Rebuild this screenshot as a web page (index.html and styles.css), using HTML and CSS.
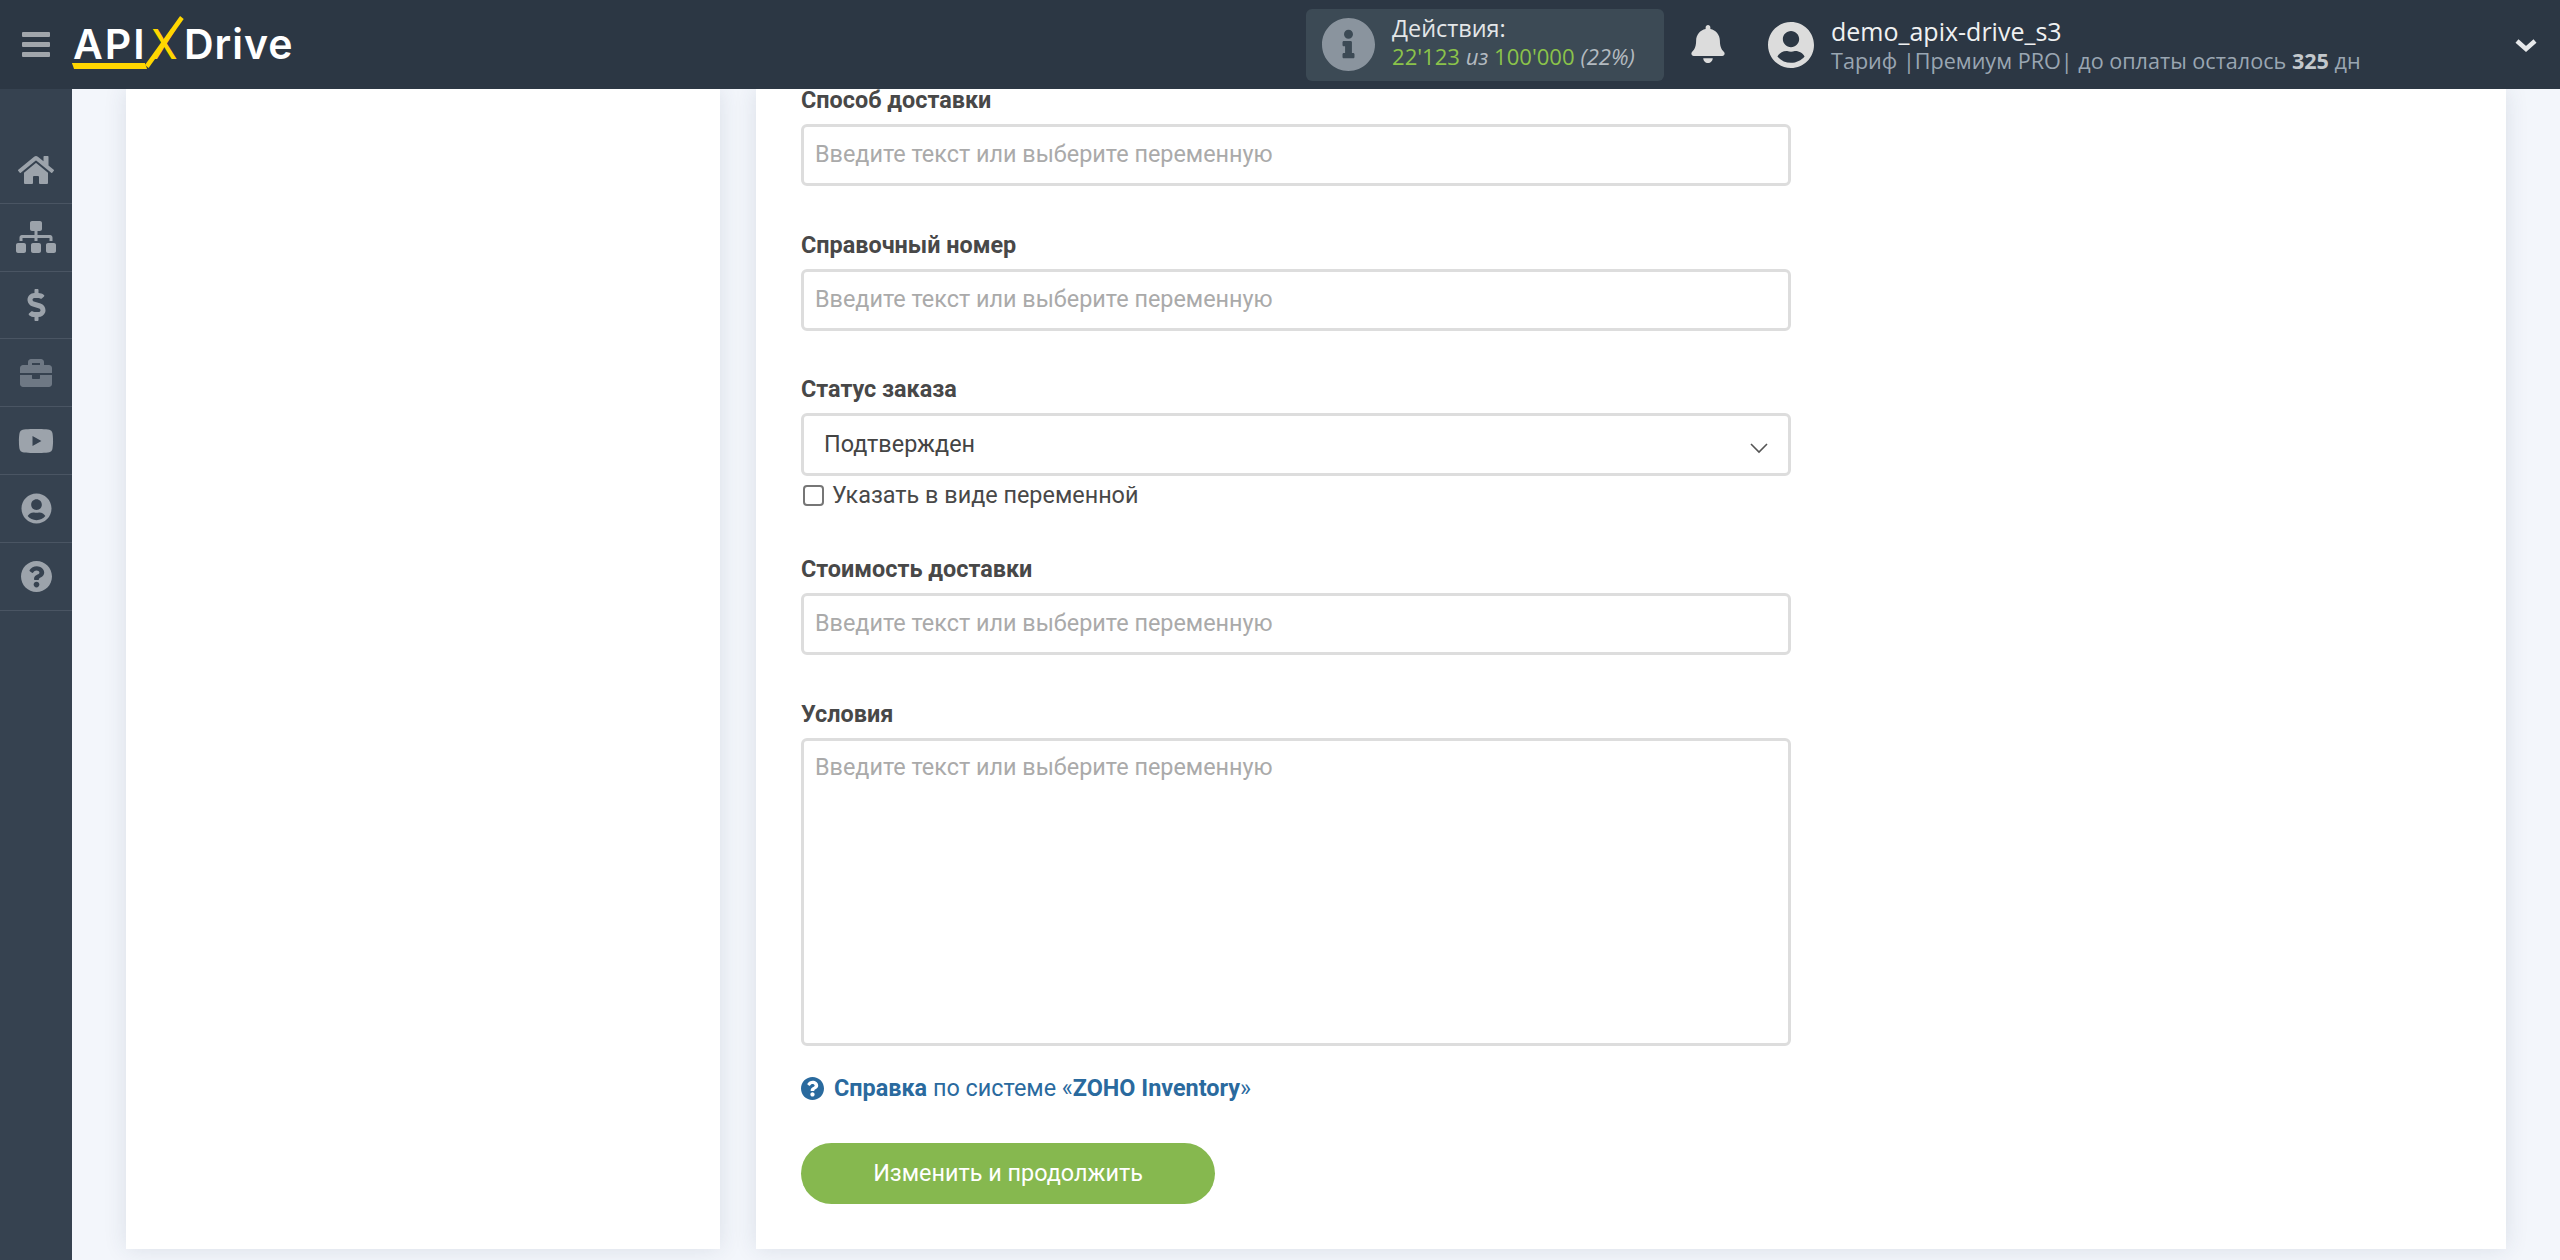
FILE: index.html
```html
<!DOCTYPE html>
<html lang="ru">
<head>
  <meta charset="UTF-8">
  <title>ApiX-Drive</title>
  <link rel="stylesheet" href="styles.css">
</head>
<body>
<div class="hd">
  <div class="burger"><span></span><span></span><span></span></div>
  <div class="logo"><span class="logo-api">API</span><span class="logo-x">X</span><span class="logo-drive">Drive</span></div>
  <div class="actions">
    <svg class="actions-ic" viewBox="8 8 496 496"><path d="M256 8C119.043 8 8 119.083 8 256c0 136.997 111.043 248 248 248s248-111.003 248-248C504 119.083 392.957 8 256 8zm0 110c23.196 0 42 18.804 42 42s-18.804 42-42 42-42-18.804-42-42 18.804-42 42-42zm56 254c0 6.627-5.373 12-12 12h-88c-6.627 0-12-5.373-12-12v-24c0-6.627 5.373-12 12-12h12v-64h-12c-6.627 0-12-5.373-12-12v-24c0-6.627 5.373-12 12-12h64c6.627 0 12 5.373 12 12v100h12c6.627 0 12 5.373 12 12v24z"/></svg>
    <div class="actions-txt">
      <div class="actions-t">Действия:</div>
      <div class="actions-n"><b>22'123</b> <i>из</i> <b>100'000</b> <i>(22%)</i></div>
    </div>
  </div>
  <svg class="bell" viewBox="0 0 448 512"><path d="M224 512c35.32 0 63.97-28.65 63.97-64H160.03c0 35.35 28.65 64 63.97 64zm215.39-149.71c-19.32-20.76-55.47-51.99-55.47-154.29 0-77.7-54.48-139.9-127.94-155.16V32c0-17.67-14.32-32-31.98-32s-31.98 14.33-31.98 32v20.84C118.56 68.1 64.08 130.3 64.08 208c0 102.3-36.15 133.53-55.47 154.29-6 6.45-8.66 14.16-8.61 21.71.11 16.4 12.98 32 32.1 32h383.8c19.12 0 32-15.6 32.1-32 .05-7.55-2.61-15.27-8.61-21.71z"/></svg>
  <svg class="avatar" viewBox="0 8 496 496"><path d="M248 8C111 8 0 119 0 256s111 248 248 248 248-111 248-248S385 8 248 8zm0 96c48.6 0 88 39.4 88 88s-39.4 88-88 88-88-39.4-88-88 39.4-88 88-88zm0 344c-58.7 0-111.3-26.6-146.5-68.2 18.8-35.4 55.6-59.8 98.5-59.8 2.4 0 4.8.4 7.1 1.1 13 4.2 26.6 6.9 40.9 6.9 14.3 0 28-2.7 40.9-6.9 2.3-.7 4.7-1.1 7.1-1.1 42.9 0 79.7 24.4 98.5 59.8C359.3 421.4 306.7 448 248 448z"/></svg>
  <div class="user">
    <div class="user-name">demo_apix-drive_s3</div>
    <div class="user-plan">Тариф |Премиум PRO| до оплаты осталось <b>325</b> дн</div>
  </div>
  <svg class="hd-arrow" viewBox="0 0 24 14"><path d="M3 3l9 8 9-8" fill="none" stroke="#e6e8ea" stroke-width="4.5"/></svg>
</div>

<div class="wrap">
  <div class="side">
    <div class="side-i"><svg viewBox="0 0 576 512" class="ic-home"><path d="M280.37 148.26L96 300.11V464a16 16 0 0 0 16 16l112.06-.29a16 16 0 0 0 15.92-16V368a16 16 0 0 1 16-16h64a16 16 0 0 1 16 16v95.64a16 16 0 0 0 16 16.05L464 480a16 16 0 0 0 16-16V300L295.67 148.26a12.19 12.19 0 0 0-15.3 0zM571.6 251.47L488 182.56V44.05a12 12 0 0 0-12-12h-56a12 12 0 0 0-12 12v72.61L318.47 43a48 48 0 0 0-61 0L4.34 251.47a12 12 0 0 0-1.6 16.9l25.5 31A12 12 0 0 0 45.15 301l235.22-193.74a12.19 12.19 0 0 1 15.3 0L530.9 301a12 12 0 0 0 16.9-1.6l25.5-31a12 12 0 0 0-1.7-16.93z"/></svg></div>
    <div class="side-i"><svg viewBox="0 0 640 512" class="ic-map"><path d="M128 352H32c-17.67 0-32 14.33-32 32v96c0 17.67 14.33 32 32 32h96c17.67 0 32-14.33 32-32v-96c0-17.67-14.33-32-32-32zm-24-80h192v48h48v-48h192v48h48v-57.59c0-21.17-17.23-38.41-38.41-38.41H344v-64h40c17.67 0 32-14.33 32-32V32c0-17.67-14.33-32-32-32H256c-17.67 0-32 14.33-32 32v96c0 17.67 14.33 32 32 32h40v64H94.41C73.23 224 56 241.23 56 262.41V320h48v-48zm264 80h-96c-17.67 0-32 14.33-32 32v96c0 17.67 14.33 32 32 32h96c17.67 0 32-14.33 32-32v-96c0-17.67-14.33-32-32-32zm240 0h-96c-17.67 0-32 14.33-32 32v96c0 17.67 14.33 32 32 32h96c17.67 0 32-14.33 32-32v-96c0-17.67-14.33-32-32-32z"/></svg></div>
    <div class="side-i"><svg viewBox="0 0 288 512" class="ic-usd"><path d="M209.2 233.4l-108-31.6C88.7 198.2 80 186.5 80 173.5c0-16.3 13.2-29.5 29.5-29.5h66.3c12.2 0 24.2 3.7 34.2 10.5 6.1 4.1 14.3 3.1 19.5-2l34.8-34c7.1-6.9 6.1-18.4-1.8-24.5C238 74.8 207.4 64.1 176 64V16c0-8.8-7.2-16-16-16h-32c-8.8 0-16 7.2-16 16v48h-2.5C45.8 64-5.4 118.7.5 183.6c4.2 46.1 39.4 83.6 83.8 96.6l102.5 30c12.5 3.7 21.2 15.3 21.2 28.3 0 16.3-13.2 29.5-29.5 29.5h-66.3C100 368 88 364.3 78 357.5c-6.1-4.1-14.3-3.1-19.5 2l-34.8 34c-7.1 6.9-6.1 18.4 1.8 24.5 24.5 19.2 55.1 29.9 86.5 30v48c0 8.8 7.2 16 16 16h32c8.8 0 16-7.2 16-16v-48.2c46.6-.9 90.3-28.6 105.7-72.7 21.5-61.6-14.6-124.8-72.5-141.7z"/></svg></div>
    <div class="side-i dim"><svg viewBox="0 0 512 512" class="ic-case"><path d="M320 336c0 8.84-7.16 16-16 16h-96c-8.84 0-16-7.16-16-16v-48H0v144c0 25.6 22.4 48 48 48h416c25.6 0 48-22.4 48-48V288H320v48zm144-208h-80V80c0-25.6-22.4-48-48-48H176c-25.6 0-48 22.4-48 48v48H48c-25.6 0-48 22.4-48 48v80h512v-80c0-25.6-22.4-48-48-48zm-144 0H192V96h128v32z"/></svg></div>
    <div class="side-i"><svg viewBox="0 0 576 512" class="ic-yt"><path d="M549.655 124.083c-6.281-23.65-24.787-42.276-48.284-48.597C458.781 64 288 64 288 64S117.22 64 74.629 75.486c-23.497 6.322-42.003 24.947-48.284 48.597-11.412 42.867-11.412 132.305-11.412 132.305s0 89.438 11.412 132.305c6.281 23.65 24.787 41.5 48.284 47.821C117.22 448 288 448 288 448s170.78 0 213.371-11.486c23.497-6.321 42.003-24.171 48.284-47.821 11.412-42.867 11.412-132.305 11.412-132.305s0-89.438-11.412-132.305zm-317.51 213.508V175.185l142.739 81.205-142.739 81.201z"/></svg></div>
    <div class="side-i"><svg viewBox="0 0 496 512" class="ic-round"><path d="M248 8C111 8 0 119 0 256s111 248 248 248 248-111 248-248S385 8 248 8zm0 96c48.6 0 88 39.4 88 88s-39.4 88-88 88-88-39.4-88-88 39.4-88 88-88zm0 344c-58.7 0-111.3-26.6-146.5-68.2 18.8-35.4 55.6-59.8 98.5-59.8 2.4 0 4.8.4 7.1 1.1 13 4.2 26.6 6.9 40.9 6.9 14.3 0 28-2.7 40.9-6.9 2.3-.7 4.7-1.1 7.1-1.1 42.9 0 79.7 24.4 98.5 59.8C359.3 421.4 306.7 448 248 448z"/></svg></div>
    <div class="side-i"><svg viewBox="8 8 496 496" class="ic-round"><path d="M504 256c0 136.997-111.043 248-248 248S8 392.997 8 256C8 119.083 119.043 8 256 8s248 111.083 248 248zM262.655 90c-54.497 0-89.255 22.957-116.549 63.758-3.536 5.286-2.353 12.415 2.715 16.258l34.699 26.31c5.205 3.947 12.621 3.008 16.665-2.122 17.864-22.658 30.113-35.797 57.303-35.797 20.429 0 45.698 13.148 45.698 32.958 0 14.976-12.363 22.667-32.534 33.976C247.128 238.528 216 254.941 216 296v4c0 6.627 5.373 12 12 12h56c6.627 0 12-5.373 12-12v-1.333c0-28.462 83.186-29.647 83.186-106.667 0-58.002-60.165-102-116.531-102zM256 338c-25.365 0-46 20.635-46 46 0 25.364 20.635 46 46 46s46-20.636 46-46c0-25.365-20.635-46-46-46z"/></svg></div>
  </div>

  <div class="main">
    <div class="card card-left"></div>
    <div class="card card-right">
      <div class="field">
        <div class="lbl">Способ доставки</div>
        <div class="inp">Введите текст или выберите переменную</div>
      </div>
      <div class="field">
        <div class="lbl">Справочный номер</div>
        <div class="inp">Введите текст или выберите переменную</div>
      </div>
      <div class="field field-sel">
        <div class="lbl">Статус заказа</div>
        <div class="inp sel">
          <span>Подтвержден</span>
          <svg viewBox="0 0 20 12"><path d="M2 2l8 8 8-8" fill="none" stroke="#555" stroke-width="1.6"/></svg>
        </div>
        <div class="check"><span class="box"></span>Указать в виде переменной</div>
      </div>
      <div class="field">
        <div class="lbl">Стоимость доставки</div>
        <div class="inp">Введите текст или выберите переменную</div>
      </div>
      <div class="field">
        <div class="lbl">Условия</div>
        <div class="inp area">Введите текст или выберите переменную</div>
      </div>
      <div class="help">
        <svg viewBox="8 8 496 496"><path d="M504 256c0 136.997-111.043 248-248 248S8 392.997 8 256C8 119.083 119.043 8 256 8s248 111.083 248 248zM262.655 90c-54.497 0-89.255 22.957-116.549 63.758-3.536 5.286-2.353 12.415 2.715 16.258l34.699 26.31c5.205 3.947 12.621 3.008 16.665-2.122 17.864-22.658 30.113-35.797 57.303-35.797 20.429 0 45.698 13.148 45.698 32.958 0 14.976-12.363 22.667-32.534 33.976C247.128 238.528 216 254.941 216 296v4c0 6.627 5.373 12 12 12h56c6.627 0 12-5.373 12-12v-1.333c0-28.462 83.186-29.647 83.186-106.667 0-58.002-60.165-102-116.531-102zM256 338c-25.365 0-46 20.635-46 46 0 25.364 20.635 46 46 46s46-20.636 46-46c0-25.365-20.635-46-46-46z"/></svg>
        <span><b>Справка</b> по системе «<b>ZOHO Inventory</b>»</span>
      </div>
      <div class="btn">Изменить и продолжить</div>
    </div>
  </div>
</div>
</body>
</html>
```

FILE: styles.css
```css
*{margin:0;padding:0;box-sizing:border-box;}
html,body{height:100%;overflow:hidden;}
body{
  background:#f3f6fb;
  color:#444;
  font-family:Roboto,"Liberation Sans",sans-serif;
  font-size:23.4px;
  display:flex;
  flex-direction:column;
}

/* top bar */
.hd{
  height:89px;
  flex:none;
  background:#2c3744;
  display:flex;
  align-items:center;
  font-family:"Open Sans","Liberation Sans",sans-serif;
  position:relative;
  z-index:2;
}
.burger{width:28px;margin-left:22px;display:flex;flex-direction:column;gap:5px;}
.burger span{height:5px;background:#a0a5ab;border-radius:1px;}
.logo{
  margin-left:23px;
  width:230px;
  display:flex;
  align-items:baseline;
  font-family:Inter,sans-serif;
  font-weight:600;
  font-size:41px;
  line-height:44px;
  color:#fff;
  position:relative;
  top:-1px;
}
.logo-api{width:78px;letter-spacing:2px;position:relative;}
.logo-api:after{
  content:"";
  position:absolute;
  left:0;
  top:41px;
  width:73px;
  height:6px;
  background:#ffd600;
  transform:skewX(20deg);
}
.logo-x{
  width:33px;
  color:#ffd600;
  font-weight:500;
  position:relative;
  transform:scaleX(.92);
  transform-origin:0 50%;
}
.logo-x:after{
  content:"";
  position:absolute;
  left:12px;
  top:-11px;
  width:5px;
  height:62px;
  background:#ffd600;
  transform:rotate(38deg);
}
.logo-drive{letter-spacing:1px;}

.actions{
  margin-left:1003px;
  width:358px;
  height:72px;
  background:#3c4a55;
  border-radius:6px;
  display:flex;
  align-items:center;
  padding-left:16px;
  gap:17px;
}
.actions-ic{width:53px;height:53px;fill:#8a949e;flex:none;}
.actions-txt{margin-top:-5px;}
.actions-t{font-size:23.4px;line-height:28px;color:#e3e6e8;}
.actions-n{font-size:22.1px;line-height:28px;color:#b3bac0;}
.actions-n b{font-weight:400;color:#8bc34a;}
.bell{width:34px;height:38px;fill:#dcdcdc;margin-left:27px;margin-top:-2px;flex:none;}
.avatar{width:46px;height:46px;fill:#dcdcdc;margin-left:43px;flex:none;}
.user{margin-left:17px;width:680px;padding-top:1px;}
.user-name{font-size:25px;line-height:31px;color:#f0f1f2;}
.user-plan{font-size:21.6px;line-height:27px;color:#9aa6b2;}
.user-plan b{color:#c3c8cc;}
.hd-arrow{width:24px;height:14px;margin-left:3px;}

/* left menu */
.wrap{flex:1;display:flex;min-height:0;}
.side{width:72px;flex:none;background:#364250;padding-top:47px;}
.side-i{
  height:67.8px;
  border-bottom:1px solid #4a5563;
  display:flex;
  align-items:center;
  justify-content:center;
  fill:#9ca3ab;
}
.side-i.dim{fill:#6e7884;}
.ic-home{width:36px;height:32px;margin-top:2px;}
.ic-map{width:40px;height:32px;}
.ic-usd{width:19px;height:32px;}
.ic-case{width:32px;height:32px;}
.ic-yt{width:36px;height:32px;}
.ic-round{width:31px;height:31px;}

/* cards */
.main{flex:1;display:flex;gap:36px;padding:0 54px 11px;min-width:0;}
.card{background:#fff;box-shadow:0 0 22px rgba(40,60,90,.12);}
.card-left{width:594px;flex:none;}
.card-right{flex:1;padding-left:45px;}

.field{margin-bottom:48px;width:990px;}
.field-sel{margin-top:-1px;margin-bottom:45px;}
.lbl{font-weight:700;line-height:23px;margin-bottom:12px;color:#484848;}
.inp{
  height:62px;
  border:3px solid #ddd;
  border-radius:6px;
  padding:0 11px;
  line-height:55px;
  color:#aaa;
}
.sel{
  height:63px;
  color:#444;
  padding:0 20px;
  display:flex;
  align-items:center;
  justify-content:space-between;
}
.sel svg{width:20px;height:12px;margin-top:6px;margin-right:-1px;}
.check{display:flex;align-items:center;height:36px;margin-top:1px;color:#484848;}
.box{
  width:21px;
  height:21px;
  border:2px solid #767676;
  border-radius:4px;
  background:#fff;
  margin-left:2px;
  margin-right:8px;
}
.area{height:308px;line-height:31px;padding-top:11px;}
.help{
  display:flex;
  align-items:center;
  gap:10px;
  color:#2a6a9e;
  margin-top:-18px;
  height:24px;
}
.help svg{width:23px;height:23px;fill:#2a6a9e;flex:none;}
.btn{
  width:414px;
  height:61px;
  margin-top:43px;
  background:#86b84f;
  border-radius:31px;
  color:#fff;
  line-height:61px;
  text-align:center;
}
```
